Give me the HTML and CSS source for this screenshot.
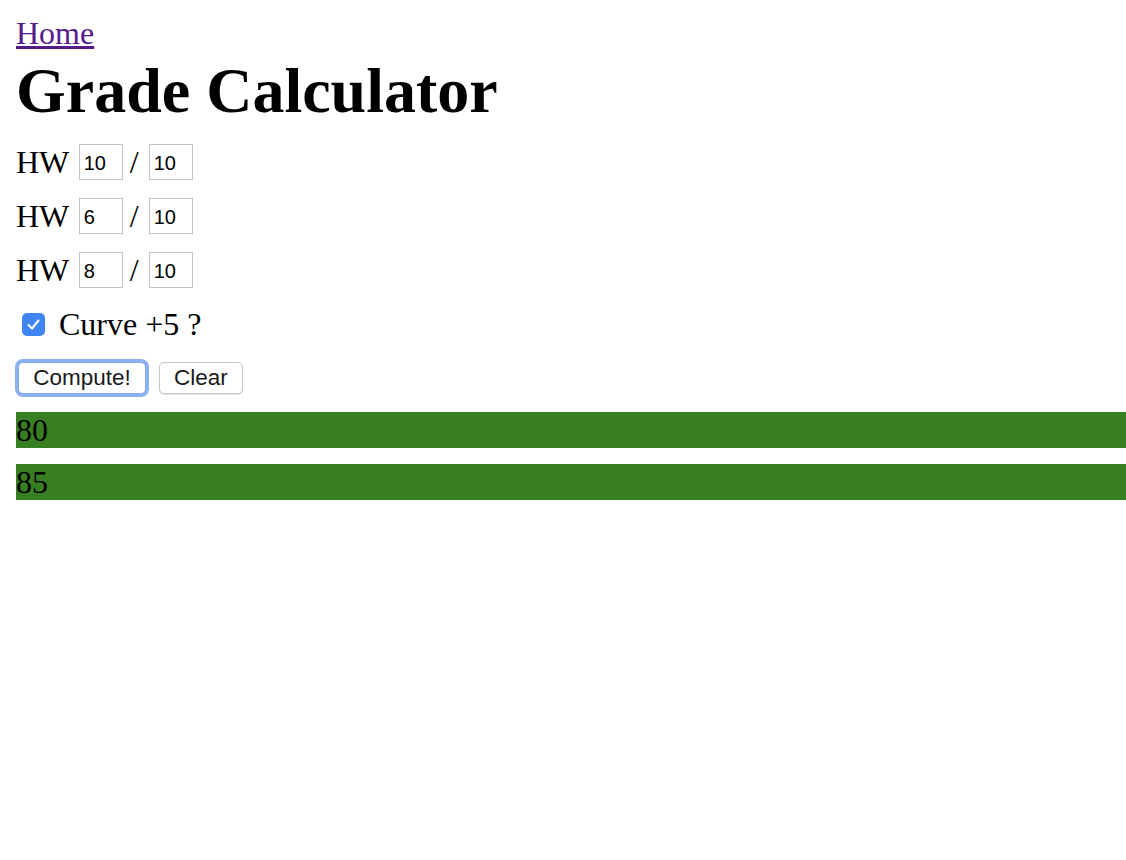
FILE: index.html
```html
<!DOCTYPE html>
<html>
<head>
<meta charset="utf-8">
<title>Grade Calculator</title>
<link rel="stylesheet" href="styles.css">
</head>
<body>
<div class="page">
  <div class="top">
    <a class="home" href="#">Home</a>
    <h1 class="title">Grade Calculator</h1>
  </div>
  <div class="row">HW <input class="num" type="text" value="10"> / <input class="num" type="text" value="10"></div>
  <div class="row">HW <input class="num" type="text" value="6"> / <input class="num" type="text" value="10"></div>
  <div class="row">HW <input class="num" type="text" value="8"> / <input class="num" type="text" value="10"></div>
  <label class="row check-row">
    <span class="check"><svg width="23" height="23" viewBox="0 0 23 23"><rect x="0" y="0" width="23" height="23" rx="5" fill="#3f86f4"/><path d="M6.5 12 L10 15.5 L16.5 7.5" fill="none" stroke="#fff" stroke-width="2" stroke-linecap="round" stroke-linejoin="round"/></svg></span>
    <span class="check-label">Curve +5 ?</span>
  </label>
  <div class="buttons">
    <button class="btn focused" type="button">Compute!</button>
    <button class="btn" type="button">Clear</button>
  </div>
  <div class="result">80</div>
  <div class="result">85</div>
</div>
</body>
</html>
```

FILE: styles.css
```css
html, body {
  margin: 0;
  padding: 0;
  background: #fff;
}
body {
  font-family: "Liberation Serif", "Times New Roman", serif;
  font-size: 32px;
  color: #000;
  padding: 15px 0 0 16px;
}
.page {
  display: flex;
  flex-direction: column;
  gap: 16px;
}
.top {
  display: flex;
  flex-direction: column;
  align-items: flex-start;
}
.home {
  color: #551a8b;
  text-decoration: underline;
  line-height: 37px;
}
.title {
  margin: 2px 0 0;
  font-size: 64px;
  font-weight: bold;
  line-height: 73px;
}
.row {
  display: flex;
  align-items: center;
  height: 38px;
  white-space: pre;
}
.num {
  box-sizing: border-box;
  width: 44px;
  height: 36px;
  margin: 0 -1px 0 2px;
  padding: 2px 4px 0;
  border: 1px solid #c4c4c4;
  border-radius: 0;
  font-family: "Liberation Sans", Arial, sans-serif;
  font-size: 20px;
  color: #000;
  background: #fff;
  outline: none;
}
.check {
  display: inline-flex;
  width: 23px;
  height: 23px;
  margin: 0 14px 0 6px;
}
.check-label {
  line-height: 38px;
}
.buttons {
  display: flex;
  align-items: center;
  gap: 13px;
  height: 37px;
}
.btn {
  box-sizing: border-box;
  height: 32px;
  padding: 0 14px;
  border: 1px solid #c7c7c7;
  border-radius: 5px;
  background: #fff;
  font-family: "Liberation Sans", Arial, sans-serif;
  font-size: 22.5px;
  color: #1a1a1a;
  box-shadow: 0 1px 1px rgba(0,0,0,0.12);
}
.btn.focused {
  width: 128px;
  margin-left: 2px;
  border-color: #86aaf0;
  box-shadow: 0 0 0 3px #8db0f0;
}
.result {
  background: #387e22;
  height: 36px;
  line-height: 36px;
  color: #000;
}
```
